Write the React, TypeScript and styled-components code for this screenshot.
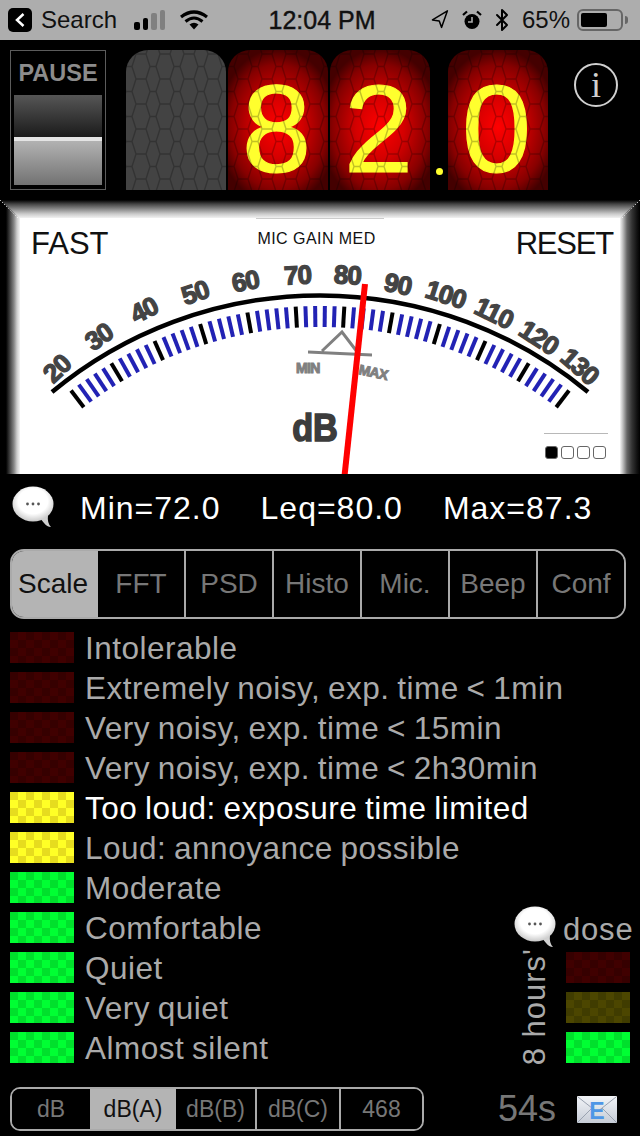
import styled, { createGlobalStyle } from "styled-components";
import { Bluetooth, Navigation } from "lucide-react";

const GlobalStyle = createGlobalStyle`
  html, body {
    margin: 0;
    background: #000;
  }
  * {
    box-sizing: border-box;
  }
`;

type Tone = "red" | "yellow" | "green" | "olive";

const LEVELS: { label: string; tone: Tone; bright?: boolean }[] = [
  { label: "Intolerable", tone: "red" },
  { label: "Extremely noisy, exp. time < 1min", tone: "red" },
  { label: "Very noisy, exp. time < 15min", tone: "red" },
  { label: "Very noisy, exp. time < 2h30min", tone: "red" },
  { label: "Too loud: exposure time limited", tone: "yellow", bright: true },
  { label: "Loud: annoyance possible", tone: "yellow" },
  { label: "Moderate", tone: "green" },
  { label: "Comfortable", tone: "green" },
  { label: "Quiet", tone: "green" },
  { label: "Very quiet", tone: "green" },
  { label: "Almost silent", tone: "green" },
];

const TABS = ["Scale", "FFT", "PSD", "Histo", "Mic.", "Beep", "Conf"];

const UNITS = [
  { label: "dB", width: 78, plain: true },
  { label: "dB(A)", width: 86, active: true, plain: true },
  { label: "dB(B)", width: 81 },
  { label: "dB(C)", width: 84 },
  { label: "468", width: 81, plain: true },
];

const DIAL_LABELS = [
  { text: "20", x: 63, y: 375, rot: -43 },
  { text: "30", x: 104, y: 344, rot: -35 },
  { text: "40", x: 148, y: 318, rot: -27 },
  { text: "50", x: 198, y: 301, rot: -19 },
  { text: "60", x: 247, y: 290, rot: -11 },
  { text: "70", x: 298, y: 284, rot: -3 },
  { text: "80", x: 347, y: 284, rot: 3 },
  { text: "90", x: 396, y: 293, rot: 12 },
  { text: "100", x: 443, y: 303, rot: 18 },
  { text: "110", x: 490, y: 321, rot: 26 },
  { text: "120", x: 534, y: 345, rot: 33 },
  { text: "130", x: 574, y: 373, rot: 41 },
];

const CX = 320;
const CY = 715;

const tickLine = (i: number) => {
  const a = ((-37.5 + (i * 75) / 55) * Math.PI) / 180;
  return {
    x1: CX + 388 * Math.sin(a),
    y1: CY - 388 * Math.cos(a),
    x2: CX + 409 * Math.sin(a),
    y2: CY - 409 * Math.cos(a),
  };
};

function HexOverlay({ id }: { id: string }) {
  return (
    <HexSvg>
      <defs>
        <pattern id={id} width="24" height="25" patternUnits="userSpaceOnUse" x="3" y="4">
          <path
            d="M7 0H17L21 12.5L17 25H7L3 12.5ZM21 12.5H24M0 12.5H3"
            fill="none"
            stroke="#000"
            strokeOpacity="0.24"
            strokeWidth="1.4"
          />
        </pattern>
      </defs>
      <rect width="100%" height="100%" fill={`url(#${id})`} />
    </HexSvg>
  );
}

function Bubble() {
  return (
    <svg width="42" height="42" viewBox="0 0 42 42">
      <defs>
        <radialGradient id="bubbleShade" cx="50%" cy="42%" r="60%">
          <stop offset="0.6" stopColor="#fff" />
          <stop offset="1" stopColor="#c4c4c4" />
        </radialGradient>
      </defs>
      <path d="M27 31L32 37Q35 41 39 41Q35 37 36 29Z" fill="#d0d0d0" />
      <ellipse cx="21" cy="18" rx="20.5" ry="17.5" fill="url(#bubbleShade)" />
      <circle cx="15.5" cy="18" r="1.4" fill="#555" />
      <circle cx="21" cy="18" r="1.4" fill="#555" />
      <circle cx="26.5" cy="18" r="1.4" fill="#555" />
    </svg>
  );
}

function MailIcon() {
  return (
    <svg width="40" height="27" viewBox="0 0 40 27">
      <defs>
        <linearGradient id="mailShade" x1="0" y1="0" x2="0" y2="1">
          <stop offset="0" stopColor="#f2f4f8" />
          <stop offset="1" stopColor="#c6ccd6" />
        </linearGradient>
      </defs>
      <rect width="40" height="27" rx="1" fill="url(#mailShade)" />
      <path d="M1 1L20 16L39 1M1 26L15 12M39 26L25 12" fill="none" stroke="#9aa2b0" strokeWidth="1" />
      <text
        x="20"
        y="23"
        textAnchor="middle"
        fontFamily="Liberation Sans, sans-serif"
        fontWeight="700"
        fontSize="23"
        fill="#4f96e6"
      >
        E
      </text>
    </svg>
  );
}

function Dial() {
  return (
    <DialSvg viewBox="0 200 640 274">
      <path d="M0 200L18 218M640 200L622 218" stroke="#fff" strokeWidth="1" strokeDasharray="1 2" />
      <path d="M52 392A420 420 0 0 1 588 392" fill="none" stroke="#000" strokeWidth="4.5" />
      {Array.from({ length: 56 }, (_, i) => (
        <line
          key={i}
          {...tickLine(i)}
          stroke={i % 5 === 0 ? "#000" : "#2222b4"}
          strokeWidth="4"
        />
      ))}
      {DIAL_LABELS.map((l) => (
        <DialLabel key={l.text} transform={`translate(${l.x} ${l.y}) rotate(${l.rot})`} textAnchor="middle">
          {l.text}
        </DialLabel>
      ))}
      <path
        d="M308 352L372 355M322 351L342 332L358 353"
        fill="none"
        stroke="#808080"
        strokeWidth="3"
      />
      <RangeLabel x="296" y="373">
        MIN
      </RangeLabel>
      <RangeLabel transform="translate(358 374) rotate(12)">MAX</RangeLabel>
      <UnitLabel transform="translate(315 441) scale(0.88 1)" textAnchor="middle">
        dB
      </UnitLabel>
      <line x1="365" y1="284" x2="344.5" y2="476" stroke="#f00" strokeWidth="6" />
    </DialSvg>
  );
}

export default function App() {
  return (
    <Page>
      <GlobalStyle />
      <StatusBar>
        <StatusGroup>
          <BackBox>
            <svg width="12" height="16" viewBox="0 0 12 16">
              <path d="M9.5 2L3 8L9.5 14" fill="none" stroke="#fff" strokeWidth="2.5" />
            </svg>
          </BackBox>
          <StatusText>Search</StatusText>
          <Signal>
            <SignalBar $h={8} />
            <SignalBar $h={12} />
            <SignalBar $h={17} $off />
            <SignalBar $h={20} $off />
          </Signal>
          <svg width="28" height="20" viewBox="0 0 28 20">
            <path d="M1 7Q14 -3 27 7" fill="none" stroke="#000" strokeWidth="3.2" />
            <path d="M5.5 11.5Q14 4.5 22.5 11.5" fill="none" stroke="#000" strokeWidth="3" />
            <path d="M9.5 14.5Q14 11 18.5 14.5L14 19.5Z" fill="#000" />
          </svg>
        </StatusGroup>
        <TimeText>12:04 PM</TimeText>
        <StatusGroup>
          <LocationIcon size={20} strokeWidth={1.8} color="#000" />
          <svg width="20" height="20" viewBox="0 0 20 20">
            <circle cx="10" cy="11.5" r="7.5" fill="#000" />
            <path d="M10 7V12H6" fill="none" stroke="#adadad" strokeWidth="1.6" />
            <path d="M1 5L5 1.5M19 5L15 1.5" stroke="#000" strokeWidth="2.2" />
          </svg>
          <BluetoothIcon size={24} strokeWidth={2} color="#000" />
          <StatusText>65%</StatusText>
          <Battery>
            <BatteryFill />
          </Battery>
        </StatusGroup>
      </StatusBar>

      <Header>
        <PauseBox>
          <PauseLabel>PAUSE</PauseLabel>
          <PauseKey>
            <PauseUpper />
            <PauseLower />
          </PauseKey>
        </PauseBox>
        <Digits>
          <DigitCell $off>
            <HexOverlay id="hex0" />
          </DigitCell>
          <DigitCell>
            <DigitChar>8</DigitChar>
            <HexOverlay id="hex1" />
          </DigitCell>
          <DigitCell>
            <DigitChar>2</DigitChar>
            <HexOverlay id="hex2" />
          </DigitCell>
          <Point />
          <DigitCell>
            <DigitChar>0</DigitChar>
            <HexOverlay id="hex3" />
          </DigitCell>
        </Digits>
        <InfoButton>i</InfoButton>
      </Header>

      <Bezel>
        <Face>
          <FaceTop>
            <BigLabel>FAST</BigLabel>
            <GainLabel>MIC GAIN MED</GainLabel>
            <ResetLabel>RESET</ResetLabel>
          </FaceTop>
          <PageDots>
            <PageDot $on />
            <PageDot />
            <PageDot />
            <PageDot />
          </PageDots>
        </Face>
        <Dial />
      </Bezel>

      <Stats>
        <Bubble />
        <StatValues>
          <StatText>Min=72.0</StatText>
          <StatText>Leq=80.0</StatText>
          <StatText>Max=87.3</StatText>
        </StatValues>
      </Stats>

      <Tabs>
        {TABS.map((t, i) => (
          <Tab key={t} $active={i === 0}>
            {t}
          </Tab>
        ))}
      </Tabs>

      <LegendArea>
        <LegendList>
          {LEVELS.map((l) => (
            <LegendRow key={l.label}>
              <Swatch $tone={l.tone} />
              <LegendText $bright={l.bright}>{l.label}</LegendText>
            </LegendRow>
          ))}
        </LegendList>
        <Dose>
          <DoseHead>
            <Bubble />
            <DoseWord>dose</DoseWord>
          </DoseHead>
          <DoseBody>
            <HoursText>8 hours'</HoursText>
            <DoseSwatches>
              <Swatch $tone="red" />
              <Swatch $tone="olive" />
              <Swatch $tone="green" />
            </DoseSwatches>
          </DoseBody>
        </Dose>
      </LegendArea>

      <Footer>
        <Units>
          {UNITS.map((u) => (
            <Unit key={u.label} $active={u.active} $plain={u.plain} $w={u.width}>
              {u.label}
            </Unit>
          ))}
        </Units>
        <FooterRight>
          <Elapsed>54s</Elapsed>
          <MailIcon />
        </FooterRight>
      </Footer>
    </Page>
  );
}

const toneColors: Record<Tone, [string, string]> = {
  red: ["#400000", "#360000"],
  yellow: ["#ffff26", "#e6dc1e"],
  green: ["#00ff33", "#00e02c"],
  olive: ["#4c4600", "#403c00"],
};

const Page = styled.div`
  width: 640px;
  height: 1136px;
  overflow: hidden;
  background: #000;
  font-family: "Liberation Sans", Arial, sans-serif;
`;

const StatusBar = styled.div`
  height: 40px;
  background: #adadad;
  display: flex;
  align-items: center;
  justify-content: space-between;
  padding: 0 17px 0 8px;
  color: #111;
`;

const StatusGroup = styled.div`
  display: flex;
  align-items: center;
  gap: 12px;
`;

const BackBox = styled.div`
  width: 24px;
  height: 24px;
  margin-right: -3px;
  border-radius: 5px;
  background: #000;
  display: flex;
  align-items: center;
  justify-content: center;
`;

const StatusText = styled.span`
  font-size: 24px;
`;

const TimeText = styled.span`
  font-size: 25px;
  -webkit-text-stroke: 0.4px #111;
  margin-left: 6px;
`;

const LocationIcon = styled(Navigation)`
  transform: rotate(-6deg);
`;

const BluetoothIcon = styled(Bluetooth)`
  margin: 0 -4px;
`;

const Signal = styled.div`
  display: flex;
  align-items: flex-end;
  gap: 3px;
  height: 20px;
  margin: 0 3px 0 5px;
`;

const SignalBar = styled.i<{ $h: number; $off?: boolean }>`
  width: 5.5px;
  height: ${(p) => p.$h}px;
  border-radius: 2px;
  background: ${(p) => (p.$off ? "#808080" : "#000")};
`;

const Battery = styled.div`
  width: 46px;
  height: 22px;
  border: 2px solid #666;
  border-radius: 6px;
  padding: 2px;
  margin-left: -5px;
  position: relative;
  &::after {
    content: "";
    position: absolute;
    right: -7px;
    top: 5px;
    width: 3px;
    height: 8px;
    border-radius: 0 3px 3px 0;
    background: #666;
  }
`;

const BatteryFill = styled.div`
  width: 26px;
  height: 100%;
  border-radius: 2px;
  background: #000;
`;

const Header = styled.div`
  height: 160px;
  display: flex;
  align-items: flex-start;
  padding: 10px 0 0 10px;
`;

const PauseBox = styled.div`
  width: 96px;
  height: 140px;
  border: 1.5px solid #5c5c5c;
  padding: 0 3px;
  display: flex;
  flex-direction: column;
  align-items: stretch;
`;

const PauseLabel = styled.div`
  height: 44px;
  line-height: 44px;
  text-align: center;
  font-size: 23.5px;
  font-weight: 700;
  color: #8c8c8c;
`;

const PauseKey = styled.div`
  height: 90px;
  display: flex;
  flex-direction: column;
`;

const PauseUpper = styled.div`
  height: 42px;
  background: linear-gradient(#565656, #1b1b1b);
`;

const PauseLower = styled.div`
  height: 48px;
  border-top: 4px solid #e4e4e4;
  background: linear-gradient(#b2b2b2, #727272);
`;

const Digits = styled.div`
  display: flex;
  align-items: flex-start;
  gap: 2px;
  margin-left: 20px;
`;

const DigitCell = styled.div<{ $off?: boolean }>`
  position: relative;
  width: 100px;
  height: 140px;
  border-radius: 22px 22px 0 0;
  background: ${(p) =>
    p.$off
      ? "#434343"
      : "radial-gradient(ellipse 60% 56% at 50% 55%, #ff0000 0%, #d40000 40%, #860000 80%, #440000 100%)"};
  display: flex;
  align-items: center;
  justify-content: center;
`;

const DigitChar = styled.span`
  font-size: 125px;
  line-height: 100px;
  margin: 17px 3px 0 0;
  color: #ffff2e;
  -webkit-text-stroke: 1.2px #ffff2e;
`;

const HexSvg = styled.svg`
  position: absolute;
  inset: 0;
  width: 100%;
  height: 100%;
  border-radius: 22px 22px 0 0;
`;

const Point = styled.i`
  width: 7px;
  height: 7px;
  margin: 118px 3px 0 4px;
  border-radius: 50%;
  background: #ffff2e;
`;

const InfoButton = styled.div`
  width: 44px;
  height: 44px;
  margin: 13px 0 0 26px;
  border: 2px solid #d0d0d0;
  border-radius: 50%;
  color: #d0d0d0;
  font-family: "Liberation Serif", serif;
  font-size: 36px;
  line-height: 40px;
  text-align: center;
`;

const Bezel = styled.div`
  position: relative;
  height: 274px;
  padding: 18px 20px 0;
  background: linear-gradient(#000 0, #444 4px, #888 9px, #ccc 14px, #f2f2f2 18px);
  &::before,
  &::after {
    content: "";
    position: absolute;
    top: 0;
    bottom: 0;
    width: 20px;
  }
  &::before {
    left: 0;
    background: linear-gradient(to right, #000 0, #000 6px, #444 10px, #888 14px, #ccc 17px, #f4f4f4 20px);
    clip-path: polygon(0 0, 100% 18px, 100% 100%, 0 100%);
  }
  &::after {
    right: 0;
    background: linear-gradient(to left, #000 0, #111 3px, #333 8px, #666 13px, #bbb 17px, #f4f4f4 20px);
    clip-path: polygon(100% 0, 0 18px, 0 100%, 100% 100%);
  }
`;

const Face = styled.div`
  height: 256px;
  background: #fff;
  display: flex;
  flex-direction: column;
  justify-content: space-between;
  padding: 0 7px 15px 11px;
`;

const FaceTop = styled.div`
  display: flex;
  justify-content: space-between;
  align-items: flex-start;
  color: #111;
`;

const BigLabel = styled.span`
  font-size: 31px;
  line-height: 36px;
  margin-top: 8px;
`;

const ResetLabel = styled(BigLabel)`
  letter-spacing: -1.2px;
`;

const GainLabel = styled.span`
  width: 128px;
  border-top: 1px solid #ccc;
  margin-left: 16px;
  padding: 11px 7px 0 0;
  text-align: center;
  font-size: 16px;
  letter-spacing: 0.45px;
  white-space: nowrap;
`;

const PageDots = styled.div`
  align-self: flex-end;
  width: 64px;
  margin-right: 5px;
  display: flex;
  gap: 3px;
  padding: 12px 1px 0;
  border-top: 1px solid #b8b8b8;
`;

const PageDot = styled.i<{ $on?: boolean }>`
  width: 13px;
  height: 13px;
  border: 1px solid #666;
  border-radius: 3px;
  background: ${(p) => (p.$on ? "#000" : "#fff")};
`;

const DialSvg = styled.svg`
  position: absolute;
  inset: 0;
  width: 100%;
  height: 100%;
  z-index: 1;
`;

const DialLabel = styled.text`
  font-family: "Liberation Sans", sans-serif;
  font-size: 26px;
  font-weight: 700;
  fill: #444;
  stroke: #444;
  stroke-width: 1.3px;
  letter-spacing: -1px;
`;

const RangeLabel = styled.text`
  font-family: "Liberation Sans", sans-serif;
  font-size: 14px;
  font-weight: 700;
  fill: #808080;
  stroke: #808080;
  stroke-width: 1px;
  letter-spacing: -0.6px;
`;

const UnitLabel = styled.text`
  font-family: "Liberation Sans", sans-serif;
  font-size: 39px;
  font-weight: 700;
  fill: #3c3c3c;
  stroke: #3c3c3c;
  stroke-width: 1.6px;
`;

const Stats = styled.div`
  height: 75px;
  display: flex;
  align-items: flex-start;
  padding: 12px 0 0 12px;
`;

const StatValues = styled.div`
  display: flex;
  gap: 40px;
  margin-left: 26px;
  padding-top: 4px;
`;

const StatText = styled.span`
  font-size: 32px;
  letter-spacing: 1px;
  color: #fff;
`;

const Tabs = styled.div`
  width: 616px;
  height: 70px;
  margin-left: 10px;
  display: flex;
  border: 2px solid #aaa;
  border-radius: 14px;
  overflow: hidden;
`;

const Tab = styled.div<{ $active?: boolean }>`
  flex: 0 0 88px;
  display: flex;
  align-items: center;
  justify-content: center;
  font-size: 28px;
  background: ${(p) => (p.$active ? "#b4b4b4" : "#000")};
  color: ${(p) => (p.$active ? "#111" : "#777")};
  border-right: 2px solid #aaa;
  &:first-child {
    flex-basis: 86px;
    padding-right: 4px;
    border-right: 0;
  }
  &:last-child {
    flex-basis: 86px;
    border-right: 0;
  }
`;

const LegendArea = styled.div`
  display: flex;
  justify-content: space-between;
  padding: 13px 6px 0 10px;
`;

const LegendList = styled.div`
  width: 490px;
  display: flex;
  flex-direction: column;
`;

const LegendRow = styled.div`
  height: 40px;
  display: flex;
  align-items: flex-start;
  gap: 11px;
`;

const Swatch = styled.div<{ $tone: Tone }>`
  flex: none;
  width: 64px;
  height: 31px;
  background: repeating-conic-gradient(
      ${(p) => toneColors[p.$tone][0]} 0 25%,
      ${(p) => toneColors[p.$tone][1]} 0 50%
    )
    0 0 / 16px 16px;
`;

const LegendText = styled.span<{ $bright?: boolean }>`
  font-size: 31.5px;
  line-height: 32px;
  letter-spacing: 0.5px;
  word-spacing: -1.5px;
  white-space: nowrap;
  color: ${(p) => (p.$bright ? "#fff" : "#aaa")};
`;

const Dose = styled.div`
  width: 120px;
  flex-shrink: 0;
  align-self: flex-end;
  margin-bottom: 7px;
  display: flex;
  flex-direction: column;
`;

const DoseHead = styled.div`
  display: flex;
  align-items: flex-end;
  gap: 7px;
  height: 45px;
`;

const DoseWord = styled.span`
  font-size: 31px;
  line-height: 36px;
  letter-spacing: 0.8px;
  color: #aaa;
`;

const DoseBody = styled.div`
  display: flex;
  justify-content: space-between;
  padding-right: 4px;
`;

const HoursText = styled.span`
  writing-mode: vertical-rl;
  transform: rotate(180deg);
  margin-left: 5px;
  font-size: 31px;
  line-height: 32px;
  letter-spacing: 1px;
  color: #aaa;
  white-space: nowrap;
`;

const DoseSwatches = styled.div`
  align-self: flex-end;
  margin-bottom: 2px;
  display: flex;
  flex-direction: column;
  gap: 9px;
`;

const Footer = styled.div`
  display: flex;
  align-items: center;
  justify-content: space-between;
  margin-top: 15px;
  padding: 0 23px 0 10px;
`;

const Units = styled.div`
  display: flex;
  height: 44px;
  border: 2px solid #aaa;
  border-radius: 10px;
  overflow: hidden;
`;

const Unit = styled.div<{ $active?: boolean; $plain?: boolean; $w: number }>`
  width: ${(p) => p.$w}px;
  display: flex;
  align-items: center;
  justify-content: center;
  font-size: 23px;
  background: ${(p) => (p.$active ? "#b4b4b4" : "#000")};
  color: ${(p) => (p.$active ? "#111" : "#777")};
  border-right: ${(p) => (p.$plain ? "0" : "2px solid #aaa")};
`;

const FooterRight = styled.div`
  display: flex;
  align-items: center;
  gap: 21px;
`;

const Elapsed = styled.span`
  font-size: 36px;
  color: #777;
`;
